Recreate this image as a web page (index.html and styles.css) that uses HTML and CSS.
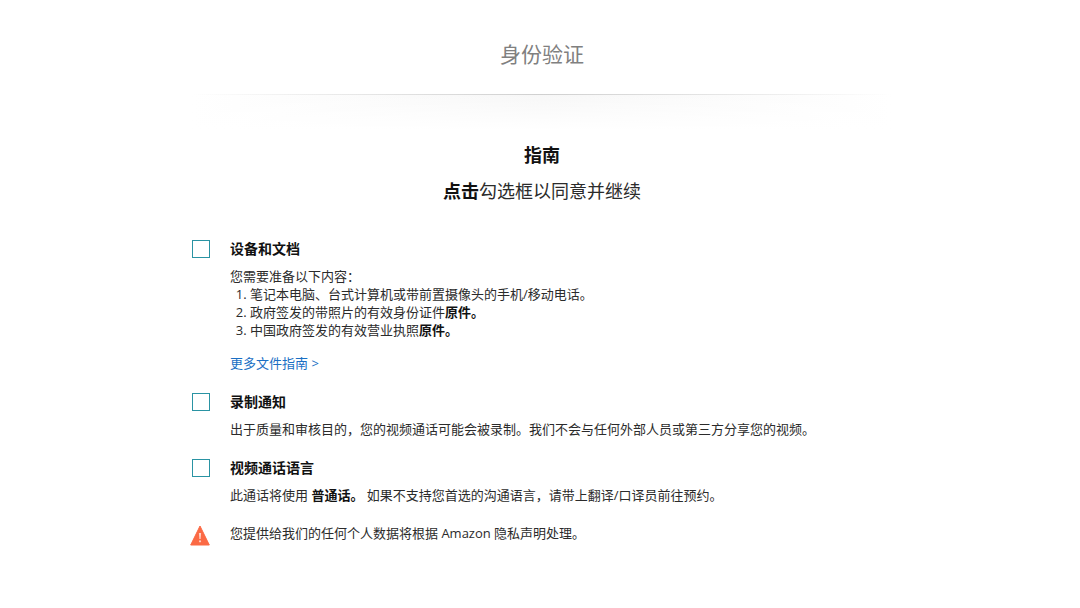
FILE: index.html
```html
<!DOCTYPE html>
<html lang="zh-CN">
<head>
  <meta charset="utf-8">
  <meta name="viewport" content="width=device-width, initial-scale=1">
  <title>身份验证</title>
  <link rel="stylesheet" href="styles.css">
</head>
<body>
  <div class="page">
    <header class="page-header">
      <h1>身份验证</h1>
    </header>
    <div class="divider"></div>

    <main>
      <div class="intro">
        <h2>指南</h2>
        <p><strong>点击</strong>勾选框以同意并继续</p>
      </div>

      <form class="guidelines">
        <div class="guideline">
          <input type="checkbox" class="checkbox" id="devices" name="devices">
          <div class="guideline-body">
            <label for="devices">设备和文档</label>
            <p>您需要准备以下内容：</p>
            <ol>
              <li>笔记本电脑、台式计算机或带前置摄像头的手机/移动电话。</li>
              <li>政府签发的带照片的有效身份证件<strong>原件。</strong></li>
              <li>中国政府签发的有效营业执照<strong>原件。</strong></li>
            </ol>
            <a href="#" class="more-link">更多文件指南 &gt;</a>
          </div>
        </div>

        <div class="guideline">
          <input type="checkbox" class="checkbox" id="recording" name="recording">
          <div class="guideline-body">
            <label for="recording">录制通知</label>
            <p>出于质量和审核目的，您的视频通话可能会被录制。我们不会与任何外部人员或第三方分享您的视频。</p>
          </div>
        </div>

        <div class="guideline">
          <input type="checkbox" class="checkbox" id="language" name="language">
          <div class="guideline-body">
            <label for="language">视频通话语言</label>
            <p>此通话将使用 <strong>普通话。</strong> 如果不支持您首选的沟通语言，请带上翻译/口译员前往预约。</p>
          </div>
        </div>

        <div class="guideline">
          <svg class="warning-icon" viewBox="0 0 20 21" aria-hidden="true">
            <path d="M10 1 19.300 20H.7Z" fill="#fb6a45" stroke="#fb6a45" stroke-linejoin="round"/>
            <path d="M8.900 8h2.200l-.5 6H9.400Z" fill="#ffd3c6"/>
            <circle cx="10" cy="16.300" r="1.100" fill="#ffd3c6"/>
          </svg>
          <p>您提供给我们的任何个人数据将根据 Amazon 隐私声明处理。</p>
        </div>
      </form>
    </main>
  </div>
</body>
</html>
```

FILE: styles.css
```css
* {
  box-sizing: border-box;
}

body {
  margin: 0;
  background: #fff;
  color: #2b2b2b;
  font-family: "Open Sans", "Noto Sans CJK SC", sans-serif;
  font-size: 13px;
  line-height: 18px;
}

h1,
h2,
p,
ol {
  margin: 0;
}

.page {
  max-width: 704px;
  margin: 0 auto;
  padding-left: 4px;
}

.page-header {
  padding: 39px 0 25px;
  text-align: center;
}

h1 {
  color: #808080;
  font-size: 21px;
  font-weight: 400;
  line-height: 30px;
}

/* Thin line with a soft shadow that fades out on both sides */
.divider {
  height: 36px;
  background:
    linear-gradient(to right, transparent, #d0d0d0 50%, transparent) top / 100% 1px no-repeat,
    linear-gradient(to bottom, transparent, #fff),
    linear-gradient(to right, #fff, #f7f7f7 50%, #fff);
}

.intro {
  padding: 13px 0 36px;
  font-size: 18px;
  line-height: 24px;
  text-align: center;
}

h2 {
  margin-bottom: 12px;
  color: #111;
  font-size: 18px;
  font-weight: 700;
}

.guidelines {
  display: flex;
  flex-direction: column;
  gap: 20px;
}

.guideline {
  display: flex;
  align-items: flex-start;
  gap: 20px;
}

.checkbox {
  flex: none;
  appearance: none;
  width: 18px;
  height: 18px;
  margin: 1px 0 0;
  border: 1px solid #2a93a3;
  background: #fff;
}

.checkbox:checked {
  background: #2a93a3;
}

.guideline-body {
  flex: 1;
}

label {
  display: block;
  margin-bottom: 8px;
  color: #111;
  font-size: 14px;
  font-weight: 700;
  line-height: 20px;
}

strong {
  color: #111;
}

ol {
  padding-left: 20px;
}

.more-link {
  display: block;
  width: fit-content;
  margin-top: 15px;
  color: #1a6fc4;
  text-decoration: none;
}

.more-link:hover {
  text-decoration: underline;
}

.warning-icon {
  flex: none;
  width: 20px;
  height: 21px;
  margin: 1px 0 0 -2px;
}
```
